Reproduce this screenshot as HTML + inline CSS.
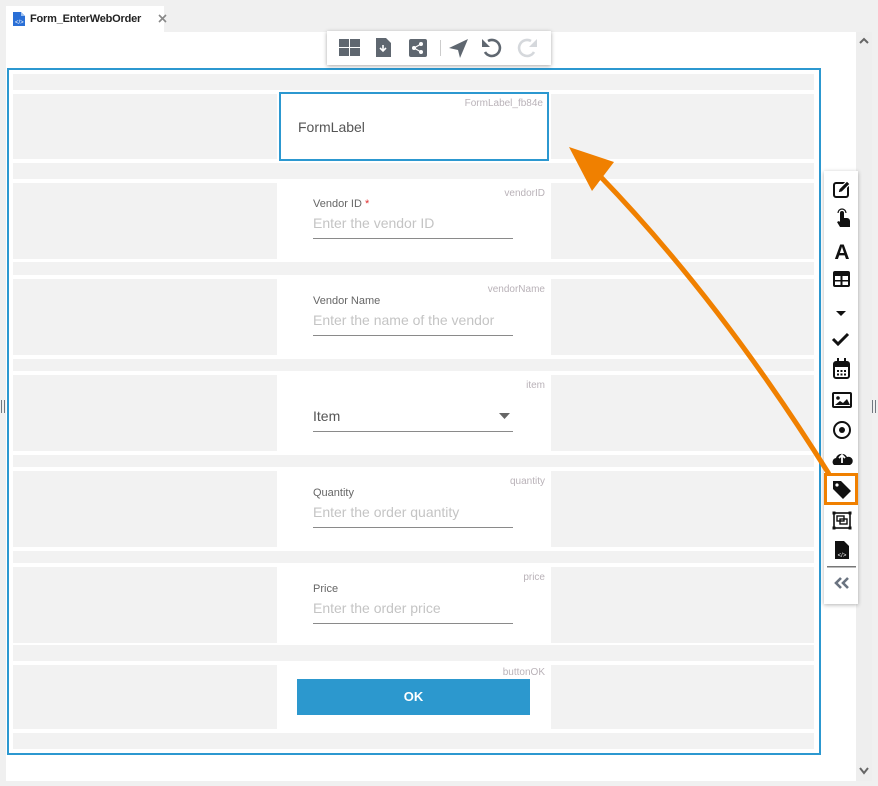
<!DOCTYPE html>
<html><head><meta charset="utf-8"><style>
*{margin:0;padding:0;box-sizing:border-box}
body{width:878px;height:786px;background:#f0f0f0;position:relative;overflow:hidden;font-family:"Liberation Sans",sans-serif}
.a{position:absolute}
.g{position:absolute;background:#f2f2f2}
.w{position:absolute;background:#fff}
.id{position:absolute;right:6px;top:5px;font-size:10px;color:#b9b2b8}
.lab{position:absolute;left:36px;font-size:11px;color:#666}
.ph{position:absolute;left:36px;font-size:14px;color:#c4c4c4}
.ul{position:absolute;left:36px;width:200px;height:1px;background:#8a8a8a}
</style></head><body>
<!-- tab -->
<div class="w" style="left:6px;top:6px;width:158px;height:27px"></div>
<svg class="a" style="left:13px;top:12px" width="12" height="14" viewBox="0 0 12 14"><path d="M0 0h8l4 4v10H0z" fill="#2a6fd6"/><path d="M8 0v4h4" fill="#9cc0f0"/><text x="2" y="12" font-size="6" fill="#fff" font-family="Liberation Sans">&lt;/&gt;</text></svg>
<div class="a" style="left:30px;top:13px;font-size:11px;font-weight:bold;color:#222;letter-spacing:-0.2px">Form_EnterWebOrder</div>
<svg class="a" style="left:158px;top:14px" width="9" height="9"><path d="M1 1l7 7M8 1L1 8" stroke="#888" stroke-width="1.6"/></svg>
<!-- content -->
<div class="w" style="left:6px;top:32px;width:850px;height:749px"></div>
<div class="a" style="left:856px;top:32px;width:16px;height:749px;background:#eee"></div>
<svg class="a" style="left:859px;top:37px" width="10" height="8"><path d="M1 6l4-4 4 4" stroke="#666" stroke-width="2" fill="none"/></svg>
<svg class="a" style="left:859px;top:767px" width="10" height="8"><path d="M1 1l4 5 4-5" stroke="#666" stroke-width="2" fill="none"/></svg>
<div class="a" style="left:1px;top:400px;width:4px;height:13px;border-left:1.5px solid #707880;border-right:1.5px solid #707880"></div>
<div class="a" style="left:872px;top:400px;width:4px;height:13px;border-left:1.5px solid #707880;border-right:1.5px solid #707880"></div>
<!-- form -->
<div class="a" style="left:7px;top:68px;width:814px;height:687px;border:2px solid #2c98d0"></div>
<div class="g" style="left:13px;top:74px;width:801px;height:16px"></div>
<div class="g" style="left:13px;top:94px;width:264px;height:65px"></div>
<div class="g" style="left:551px;top:94px;width:263px;height:65px"></div>
<div class="a" style="left:279px;top:92px;width:270px;height:69px;border:2px solid #2c98d0;background:#fff"><div class="id" style="top:4px;right:4px">FormLabel_fb84e</div><div class="a" style="left:17px;top:25px;font-size:14px;color:#555">FormLabel</div></div>

<div class="g" style="left:13px;top:163px;width:801px;height:16px"></div>
<div class="g" style="left:13px;top:183px;width:264px;height:76px"></div>
<div class="g" style="left:551px;top:183px;width:263px;height:76px"></div>
<div class="w" style="left:277px;top:183px;width:274px;height:76px"><div class="id">vendorID</div><div class="lab" style="top:15px">Vendor ID <span style="color:#e03030">*</span></div><div class="ph" style="top:32px">Enter the vendor ID</div><div class="ul" style="top:55px"></div></div>

<div class="g" style="left:13px;top:262px;width:801px;height:13px"></div>
<div class="g" style="left:13px;top:279px;width:264px;height:76px"></div>
<div class="g" style="left:551px;top:279px;width:263px;height:76px"></div>
<div class="w" style="left:277px;top:279px;width:274px;height:76px"><div class="id">vendorName</div><div class="lab" style="top:16px">Vendor Name</div><div class="ph" style="top:33px">Enter the name of the vendor</div><div class="ul" style="top:56px"></div></div>

<div class="g" style="left:13px;top:359px;width:801px;height:12px"></div>
<div class="g" style="left:13px;top:375px;width:264px;height:76px"></div>
<div class="g" style="left:551px;top:375px;width:263px;height:76px"></div>
<div class="w" style="left:277px;top:375px;width:274px;height:76px"><div class="id">item</div><div class="a" style="left:36px;top:33px;font-size:14px;color:#555">Item</div><svg class="a" style="left:222px;top:38px" width="11" height="6"><path d="M0 0h11L5.5 6z" fill="#666"/></svg><div class="ul" style="top:56px"></div></div>

<div class="g" style="left:13px;top:455px;width:801px;height:12px"></div>
<div class="g" style="left:13px;top:471px;width:264px;height:76px"></div>
<div class="g" style="left:551px;top:471px;width:263px;height:76px"></div>
<div class="w" style="left:277px;top:471px;width:274px;height:76px"><div class="id">quantity</div><div class="lab" style="top:16px">Quantity</div><div class="ph" style="top:33px">Enter the order quantity</div><div class="ul" style="top:56px"></div></div>

<div class="g" style="left:13px;top:551px;width:801px;height:12px"></div>
<div class="g" style="left:13px;top:567px;width:264px;height:76px"></div>
<div class="g" style="left:551px;top:567px;width:263px;height:76px"></div>
<div class="w" style="left:277px;top:567px;width:274px;height:76px"><div class="id">price</div><div class="lab" style="top:16px">Price</div><div class="ph" style="top:33px">Enter the order price</div><div class="ul" style="top:56px"></div></div>

<div class="g" style="left:13px;top:645px;width:801px;height:16px"></div>
<div class="g" style="left:13px;top:665px;width:264px;height:64px"></div>
<div class="g" style="left:551px;top:665px;width:263px;height:64px"></div>
<div class="w" style="left:277px;top:665px;width:274px;height:64px"><div class="id" style="top:2px">buttonOK</div><div class="a" style="left:20px;top:14px;width:233px;height:36px;background:#2c98ce;color:#fff;font-weight:bold;font-size:13px;text-align:center;line-height:36px">OK</div></div>
<div class="g" style="left:13px;top:733px;width:801px;height:16px"></div>

<!-- toolbar -->
<div class="w" style="left:327px;top:31px;width:224px;height:34px;box-shadow:0 1px 4px rgba(0,0,0,.35)"></div>
<svg class="a" style="left:327px;top:31px" width="224" height="34" fill="#5f6770">
<rect x="12" y="8" width="10" height="8"/><rect x="23" y="8" width="10" height="8"/><rect x="12" y="17" width="10" height="8"/><rect x="23" y="17" width="10" height="8"/>
<path d="M49 7h10l5 5v14H49z"/><path d="M56 14v6M53 17l3 3 3-3" stroke="#fff" stroke-width="1.6" fill="none"/>
<rect x="82" y="8" width="18" height="18" rx="2"/><circle cx="87" cy="17" r="2" fill="#fff"/><circle cx="94" cy="13" r="2" fill="#fff"/><circle cx="94" cy="21" r="2" fill="#fff"/><path d="M87 17l7-4M87 17l7 4" stroke="#fff" stroke-width="1.2"/>
<rect x="113" y="9" width="1" height="16" fill="#ccc"/>
<path d="M122 17l19-9-8 19-2-8z"/>
<path d="M161 10a8 8 0 1 1-3 11" stroke="#5f6770" stroke-width="2.6" fill="none"/><path d="M155 8v8h8z"/>
<path d="M204 10a8 8 0 1 0 3 11" stroke="#d5d8dc" stroke-width="2.6" fill="none"/><path d="M210 8v8h-8z" fill="#d5d8dc"/>
</svg>

<!-- palette -->
<div class="w" style="left:824px;top:171px;width:34px;height:433px;box-shadow:0 1px 4px rgba(0,0,0,.3)"></div>
<svg class="a" style="left:824px;top:171px" width="34" height="433" fill="#111">
<rect x="10" y="12" width="14" height="14" rx="2" fill="none" stroke="#111" stroke-width="2"/><path d="M14 22l1-4 8-8 3 3-8 8z" stroke="#fff" stroke-width="1.2"/>
<path d="M16 42a2 2 0 0 1 4 0v5h3a3 3 0 0 1 3 3v6h-10l-3-5 2-1 1 1z"/><path d="M14 42a4 4 0 0 1 8 0" stroke="#111" fill="none" stroke-width="1.2"/>
<text x="18" y="88" font-size="21" font-weight="bold" text-anchor="middle" font-family="Liberation Sans">A</text>
<rect x="9" y="100" width="17" height="16" rx="2"/><rect x="11" y="105" width="5.5" height="4" fill="#fff"/><rect x="18.5" y="105" width="5.5" height="4" fill="#fff"/><rect x="11" y="110.5" width="5.5" height="3.5" fill="#fff"/><rect x="18.5" y="110.5" width="5.5" height="3.5" fill="#fff"/>
<path d="M12 140h10l-5 5z"/>
<path d="M9 168l5 5 10-10" stroke="#111" stroke-width="3" fill="none"/>
<rect x="10" y="191" width="15" height="16" rx="2" fill="none" stroke="#111" stroke-width="2"/><rect x="10" y="191" width="15" height="5"/><rect x="13" y="187" width="2" height="5"/><rect x="20" y="187" width="2" height="5"/><g fill="#111"><rect x="13" y="199" width="2" height="2"/><rect x="16.5" y="199" width="2" height="2"/><rect x="20" y="199" width="2" height="2"/><rect x="13" y="202.5" width="2" height="2"/><rect x="16.5" y="202.5" width="2" height="2"/><rect x="20" y="202.5" width="2" height="2"/></g>
<rect x="9" y="222" width="18" height="14" rx="1" fill="none" stroke="#111" stroke-width="2"/><circle cx="14" cy="227" r="1.8"/><path d="M11 234l5-4 3 2 4-4 3 6z"/>
<circle cx="18" cy="259" r="8" fill="none" stroke="#111" stroke-width="2"/><circle cx="18" cy="259" r="3"/>
<path d="M10 294a4 4 0 0 1 2-7 6 6 0 0 1 11-1 4 4 0 0 1 3 8z"/><path d="M18 284v8M15 287l3-3 3 3" stroke="#fff" stroke-width="1.8" fill="none"/>
<path d="M9 310v8l10 10 8-8-10-10z"/><circle cx="13" cy="314" r="1.6" fill="#fff"/>
<rect x="10" y="342" width="16" height="15" fill="none" stroke="#111" stroke-width="1.6"/><rect x="13" y="345" width="7" height="5" fill="none" stroke="#111" stroke-width="1.4"/><rect x="16" y="348" width="7" height="5" fill="none" stroke="#111" stroke-width="1.4"/><rect x="8.5" y="340.5" width="3" height="3"/><rect x="24.5" y="340.5" width="3" height="3"/><rect x="8.5" y="355.5" width="3" height="3"/><rect x="24.5" y="355.5" width="3" height="3"/>
<path d="M11 370h9l5 5v13H11z"/><text x="18" y="386" font-size="6" fill="#fff" text-anchor="middle" font-family="Liberation Sans">&lt;/&gt;</text>
<rect x="3" y="395" width="29" height="1.5" fill="#777"/>
<path d="M17 407l-5 5 5 5M24 407l-5 5 5 5" stroke="#6a7380" stroke-width="2.6" fill="none"/>
</svg>
<div class="a" style="left:824px;top:473px;width:34px;height:32px;border:3px solid #f08000"></div>

<!-- arrow -->
<svg class="a" style="left:0;top:0" width="878" height="786"><path d="M829 474Q720 300 598 174" stroke="#f08000" stroke-width="5" fill="none"/><path d="M569 147l45 15-22 29z" fill="#f08000"/></svg>
</body></html>
